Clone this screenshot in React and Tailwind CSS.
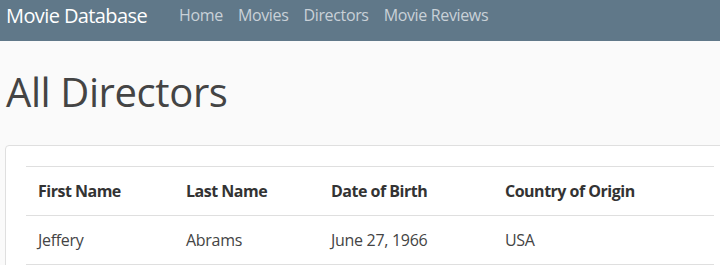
import React from 'react';

const links = ['Home', 'Movies', 'Directors', 'Movie Reviews'];

const directors = [
  { first: 'Jeffery', last: 'Abrams', dob: 'June 27, 1966', country: 'USA' },
];

const App = () => {
  return (
    <div className="h-[265px] bg-[#fafafa] text-[#444] overflow-hidden" style={{ fontFamily: '"Open Sans", sans-serif' }}>
      {/* navbar */}
      <nav className="h-[41px] bg-[#607889] flex items-start pt-[1px]">
        <a className="ml-[6px] text-[20px] leading-[30px] tracking-[-0.6px] text-white">Movie Database</a>
        <ul className="flex ml-[32px] mt-[2px] gap-[15px]">
          {links.map((l) => (
            <li key={l}><a className="text-[16px] leading-[24px] tracking-[-0.35px] text-[#c9d1d8]">{l}</a></li>
          ))}
        </ul>
      </nav>

      <div className="px-[5px]">
        <h1 className="ml-px mt-[27px] mb-[29px] text-[40px] leading-[48px] font-medium tracking-[-0.4px] text-[#444]">All Directors</h1>

        <div className="w-[740px] bg-white border border-[#dfdfdf] rounded-[4px] p-[20px]">
          <table className="w-[688px] border-collapse text-[16px] leading-[24px]">
            <thead>
              <tr className="border-t border-b border-[#dfdfdf]">
                <th className="w-[148px] p-[12px] text-left font-bold tracking-[-0.5px] text-[#333]">First Name</th>
                <th className="w-[145px] p-[12px] text-left font-bold tracking-[-0.5px] text-[#333]">Last Name</th>
                <th className="w-[174px] p-[12px] text-left font-bold tracking-[-0.5px] text-[#333]">Date of Birth</th>
                <th className="p-[12px] text-left font-bold tracking-[-0.5px] text-[#333]">Country of Origin</th>
              </tr>
            </thead>
            <tbody>
              {directors.map((d) => (
                <tr key={d.last} className="border-b border-[#dfdfdf]">
                  <td className="p-[12px] tracking-[-0.3px]">{d.first}</td>
                  <td className="p-[12px] tracking-[-0.3px]">{d.last}</td>
                  <td className="p-[12px] tracking-[-0.3px]">{d.dob}</td>
                  <td className="p-[12px] tracking-[-0.3px]">{d.country}</td>
                </tr>
              ))}
            </tbody>
          </table>
        </div>
      </div>
    </div>
  );
};

export default App;
